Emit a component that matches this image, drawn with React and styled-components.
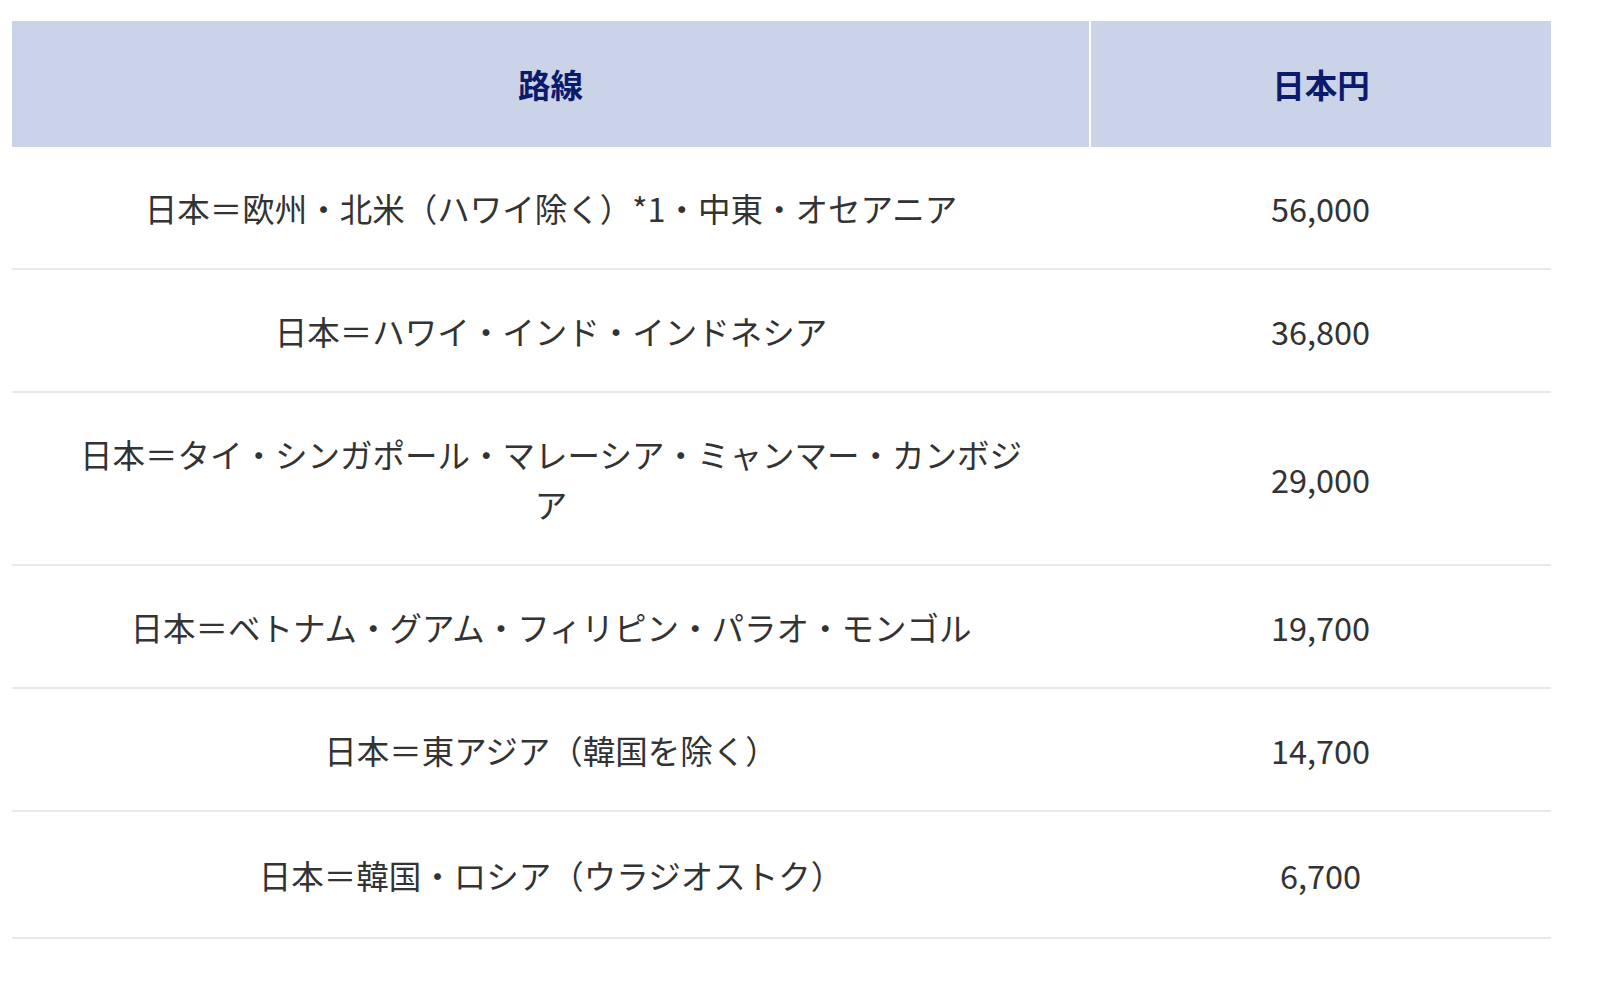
import React from "react";
import styled, { createGlobalStyle } from "styled-components";

const GlobalStyle = createGlobalStyle`
  body {
    margin: 0;
    background: #fff;
    font-family: "Noto Sans CJK JP", "Noto Sans", sans-serif;
  }
`;

const Wrap = styled.div`
  padding: 21px 51px 0 12px;
`;

const Table = styled.table`
  width: 1537px;
  border-collapse: collapse;
  table-layout: fixed;
  font-size: 32.5px;
  line-height: 50px;
  color: #333;
`;

const Head = styled.th`
  width: ${(p) => p.w};
  background: #cbd3e8;
  color: #0b1a6b;
  font-weight: 700;
  padding: 38px 0 38px;
  text-align: center;
  border-right: ${(p) => (p.last ? "none" : "2px solid #fff")};
`;

const Row = styled.tr`
  border-bottom: 2px solid #e8e8e8;

  &:last-child td {
    padding-top: 38px;
    padding-bottom: 37px;
  }
`;

const Cell = styled.td`
  padding: 36px 66px 35px;
  text-align: center;
  vertical-align: middle;
`;

const rows = [
  ["日本＝欧州・北米（ハワイ除く）*1・中東・オセアニア", "56,000"],
  ["日本＝ハワイ・インド・インドネシア", "36,800"],
  ["日本＝タイ・シンガポール・マレーシア・ミャンマー・カンボジア", "29,000"],
  ["日本＝ベトナム・グアム・フィリピン・パラオ・モンゴル", "19,700"],
  ["日本＝東アジア（韓国を除く）", "14,700"],
  ["日本＝韓国・ロシア（ウラジオストク）", "6,700"],
];

function App() {
  return (
    <Wrap>
      <GlobalStyle />
      <Table>
        <thead>
          <tr>
            <Head w="1077px">路線</Head>
            <Head w="460px" last>
              日本円
            </Head>
          </tr>
        </thead>
        <tbody>
          {rows.map((r) => (
            <Row key={r[1]}>
              <Cell>{r[0]}</Cell>
              <Cell>{r[1]}</Cell>
            </Row>
          ))}
        </tbody>
      </Table>
    </Wrap>
  );
}

export default App;
